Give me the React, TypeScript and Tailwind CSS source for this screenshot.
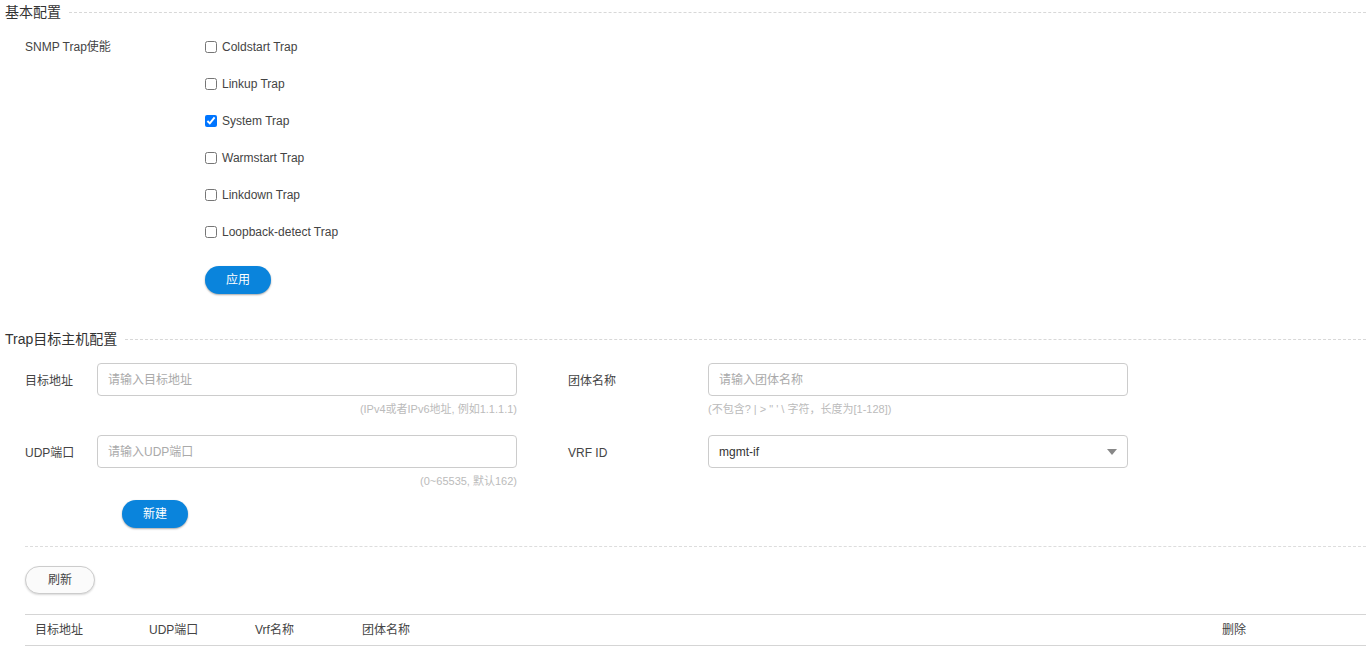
import React, { useState } from 'react';

const TRAPS = [
  { id: 'coldstart', label: 'Coldstart Trap', checked: false },
  { id: 'linkup', label: 'Linkup Trap', checked: false },
  { id: 'system', label: 'System Trap', checked: true },
  { id: 'warmstart', label: 'Warmstart Trap', checked: false },
  { id: 'linkdown', label: 'Linkdown Trap', checked: false },
  { id: 'loopback', label: 'Loopback-detect Trap', checked: false },
];

function SectionTitle({ title }: { title: string }) {
  return (
    <div className="flex items-center h-[22px]">
      <span className="text-[14px] text-[#333] pl-[5px] pr-[8px] whitespace-nowrap">{title}</span>
      <div className="flex-1 border-t border-dashed border-[#d8d8d8]" />
    </div>
  );
}

function Field({ label, placeholder, hint }: { label: string; placeholder: string; hint: string }) {
  return (
    <div className="flex">
      <div className="w-[97px] pl-[25px] pt-[9px] text-[12px] text-[#444]">{label}</div>
      <div className="w-[420px]">
        <input
          className="w-full h-[33px] border border-[#ccc] rounded-[4px] px-[10px] text-[12px] outline-none placeholder:text-[#aaa]"
          placeholder={placeholder}
        />
        <div className="text-right text-[11px] text-[#bbb] mt-[5px] h-[16px]">{hint}</div>
      </div>
    </div>
  );
}

export default function App() {
  const [traps, setTraps] = useState(TRAPS);

  return (
    <div className="bg-white w-[1366px] h-[649px] overflow-hidden" style={{ fontFamily: '"Liberation Sans", "Noto Sans CJK SC", sans-serif' }}>
      {/* 基本配置 */}
      <div className="pt-[1px]">
        <SectionTitle title="基本配置" />
      </div>
      <div className="flex mt-[16px]">
        <div className="w-[205px] pl-[25px] text-[12px] text-[#444] leading-[16px]">SNMP Trap使能</div>
        <div className="flex flex-col">
          {traps.map(t => (
            <label key={t.id} className="flex items-center h-[16px] mb-[21px] text-[12px] text-[#444]">
              <input
                type="checkbox"
                checked={t.checked}
                onChange={() => setTraps(traps.map(x => (x.id === t.id ? { ...x, checked: !x.checked } : x)))}
                className="w-[12px] h-[12px] m-0 mr-[5px]"
              />
              {t.label}
            </label>
          ))}
          <button className="w-[66px] h-[28px] mt-[5px] rounded-full bg-[#0a84dc] text-white text-[12px] shadow-[0_1px_2px_rgba(0,0,0,0.35)]">
            应用
          </button>
        </div>
      </div>

      {/* Trap目标主机配置 */}
      <div className="mt-[34px]">
        <SectionTitle title="Trap目标主机配置" />
      </div>
      <div className="mt-[13px] flex flex-col gap-[18px]">
        <div className="flex">
          <Field label="目标地址" placeholder="请输入目标地址" hint="(IPv4或者IPv6地址, 例如1.1.1.1)" />
          <div className="flex ml-[51px]">
            <div className="w-[140px] pt-[9px] text-[12px] text-[#444]">团体名称</div>
            <div className="w-[420px]">
              <input
                className="w-full h-[33px] border border-[#ccc] rounded-[4px] px-[10px] text-[12px] outline-none placeholder:text-[#aaa]"
                placeholder="请输入团体名称"
              />
              <div className="text-[11px] text-[#bbb] mt-[5px] h-[16px]">(不包含? | &gt; " ' \ 字符，长度为[1-128])</div>
            </div>
          </div>
        </div>
        <div className="flex">
          <Field label="UDP端口" placeholder="请输入UDP端口" hint="(0~65535, 默认162)" />
          <div className="flex ml-[51px]">
            <div className="w-[140px] pt-[9px] text-[12px] text-[#444]">VRF ID</div>
            <div className="w-[420px] h-[33px] border border-[#ccc] rounded-[4px] px-[10px] flex items-center justify-between text-[12px] text-[#333]">
              <span>mgmt-if</span>
              <svg width="10" height="6" viewBox="0 0 10 6"><path d="M0 0h10L5 6z" fill="#888" /></svg>
            </div>
          </div>
        </div>
      </div>
      <div className="pl-[122px] mt-[11px]">
        <button className="w-[66px] h-[28px] rounded-full bg-[#0a84dc] text-white text-[12px] shadow-[0_1px_2px_rgba(0,0,0,0.35)]">
          新建
        </button>
      </div>
      <div className="ml-[25px] mt-[18px] border-t border-dashed border-[#ddd]" />
      <div className="pl-[25px] mt-[19px]">
        <button className="w-[70px] h-[28px] rounded-full bg-[#fbfbfb] border border-[#ccc] text-[#444] text-[12px] shadow-[0_1px_2px_rgba(0,0,0,0.15)]">
          刷新
        </button>
      </div>
      <div className="ml-[25px] mt-[20px] border-t border-b border-[#d5d5d5] h-[32px] flex items-center text-[12px] text-[#444]">
        <div className="w-[124px] pl-[10px]">目标地址</div>
        <div className="w-[106px]">UDP端口</div>
        <div className="w-[107px]">Vrf名称</div>
        <div className="w-[860px]">团体名称</div>
        <div>删除</div>
      </div>
    </div>
  );
}
